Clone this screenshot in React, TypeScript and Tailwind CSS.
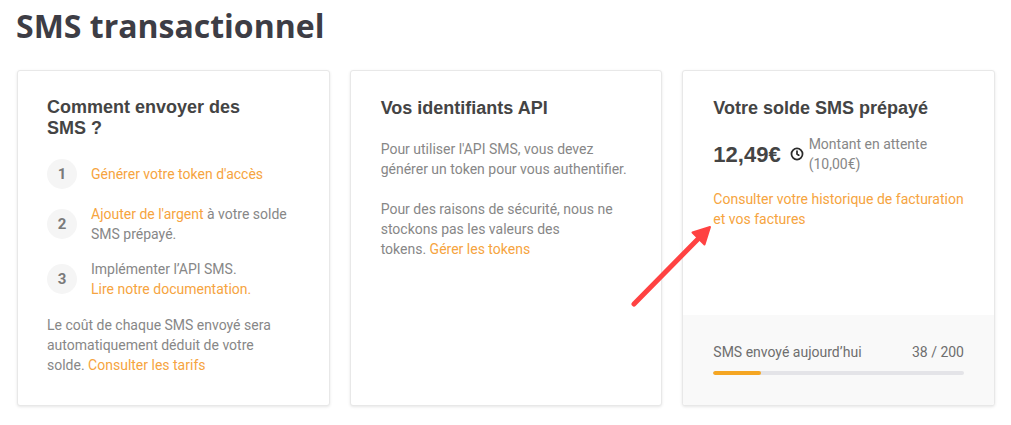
import React from 'react';

const Step = ({ n, children }: { n: number; children: React.ReactNode }) => (
  <div className="flex items-center gap-[14px]">
    <div className="w-[30px] h-[30px] shrink-0 rounded-full bg-[#f5f5f5] flex items-center justify-center text-[15px] font-bold text-[#7a7a7a]">
      {n}
    </div>
    <div className="leading-5">{children}</div>
  </div>
);

const Link = ({ children }: { children: React.ReactNode }) => (
  <span className="text-[#f6a440]">{children}</span>
);

const Clock = () => (
  <svg width="14" height="14" viewBox="0 0 24 24" fill="none" stroke="#2b2b2b" strokeWidth="3" strokeLinecap="round" strokeLinejoin="round">
    <circle cx="12" cy="12" r="9.5" />
    <path d="M12 7v5l3 2" />
  </svg>
);

const App: React.FC = () => {
  return (
    <div className="relative w-[1011px] h-[425px] bg-white overflow-hidden font-['Roboto',sans-serif] text-[14px] text-[#878787]">
      <h1 className="pl-4 pt-[6px] h-[70px] font-['Open_Sans',sans-serif] font-bold text-[32px] leading-[40px] text-[#3d3d45]">
        SMS transactionnel
      </h1>

      <div className="grid grid-cols-3 gap-[20px] pl-[17px] pr-[16px]">
        {/* Card 1 */}
        <div className="h-[336px] bg-white border border-[#e8e8e8] rounded-[3px] shadow-[0_1px_3px_rgba(0,0,0,0.10)] px-[29px] pt-[26px]">
          <h2 className="font-['Liberation_Sans',sans-serif] font-bold text-[18px] leading-[21px] text-[#444] w-[230px] mb-5">
            Comment envoyer des SMS ?
          </h2>
          <div className="flex flex-col gap-[15px]">
            <Step n={1}>
              <Link>Générer votre token d'accès</Link>
            </Step>
            <Step n={2}>
              <Link>Ajouter de l'argent</Link> à votre solde<br />SMS prépayé.
            </Step>
            <Step n={3}>
              Implémenter l’API SMS.<br />
              <Link>Lire notre documentation.</Link>
            </Step>
          </div>
          <p className="mt-4 leading-5 whitespace-nowrap">
            Le coût de chaque SMS envoyé sera<br />automatiquement déduit de votre<br />solde. <Link>Consulter les tarifs</Link>
          </p>
        </div>

        {/* Card 2 */}
        <div className="h-[336px] bg-white border border-[#e8e8e8] rounded-[3px] shadow-[0_1px_3px_rgba(0,0,0,0.10)] px-[30px] pt-[27px]">
          <h2 className="font-['Liberation_Sans',sans-serif] font-bold text-[18px] leading-[21px] text-[#444] mb-5">
            Vos identifiants API
          </h2>
          <p className="leading-5 whitespace-nowrap">
            Pour utiliser l'API SMS, vous devez<br />générer un token pour vous authentifier.
          </p>
          <p className="leading-5 mt-5 whitespace-nowrap">
            Pour des raisons de sécurité, nous ne<br />stockons pas les valeurs des<br />tokens. <Link>Gérer les tokens</Link>
          </p>
        </div>

        {/* Card 3 */}
        <div className="h-[336px] bg-white border border-[#e8e8e8] rounded-[3px] shadow-[0_1px_3px_rgba(0,0,0,0.10)] flex flex-col overflow-hidden">
          <div className="px-[30px] pt-[27px]">
            <h2 className="font-['Liberation_Sans',sans-serif] font-bold text-[18px] leading-[21px] text-[#444]">
              Votre solde SMS prépayé
            </h2>
            <div className="flex items-center mt-[15px]">
              <span className="font-['Liberation_Sans',sans-serif] font-bold text-[22px] text-[#444] mr-[9px]">12,49€</span>
              <Clock />
              <div className="leading-5 ml-[5px]">
                Montant en attente<br />(10,00€)
              </div>
            </div>
            <p className="leading-5 mt-[15px] whitespace-nowrap">
              <Link>Consulter votre historique de facturation<br />et vos factures</Link>
            </p>
          </div>
          <div className="mt-auto bg-[#f9f9f9] h-[90px] px-[30px] pt-[27px]">
            <div className="flex justify-between leading-5 text-[#6e6e6e]">
              <span>SMS envoyé aujourd’hui</span>
              <span>38 / 200</span>
            </div>
            <div className="mt-[9px] h-[4px] rounded-full bg-[#e4e4e8] overflow-hidden">
              <div className="h-full bg-[#f5a623] rounded-full" style={{ width: `${(38 / 200) * 100}%` }} />
            </div>
          </div>
        </div>
      </div>

      {/* annotation arrow */}
      <svg className="absolute left-0 top-0 pointer-events-none" width="1011" height="425">
        <line x1="634" y1="304" x2="699" y2="238" stroke="#ff4242" strokeWidth="5" strokeLinecap="round" />
        <polygon points="710,227 704.5,244.5 692.5,232.5" fill="#ff4242" stroke="#ff4242" strokeWidth="2" strokeLinejoin="round" />
      </svg>
    </div>
  );
};

export default App;
